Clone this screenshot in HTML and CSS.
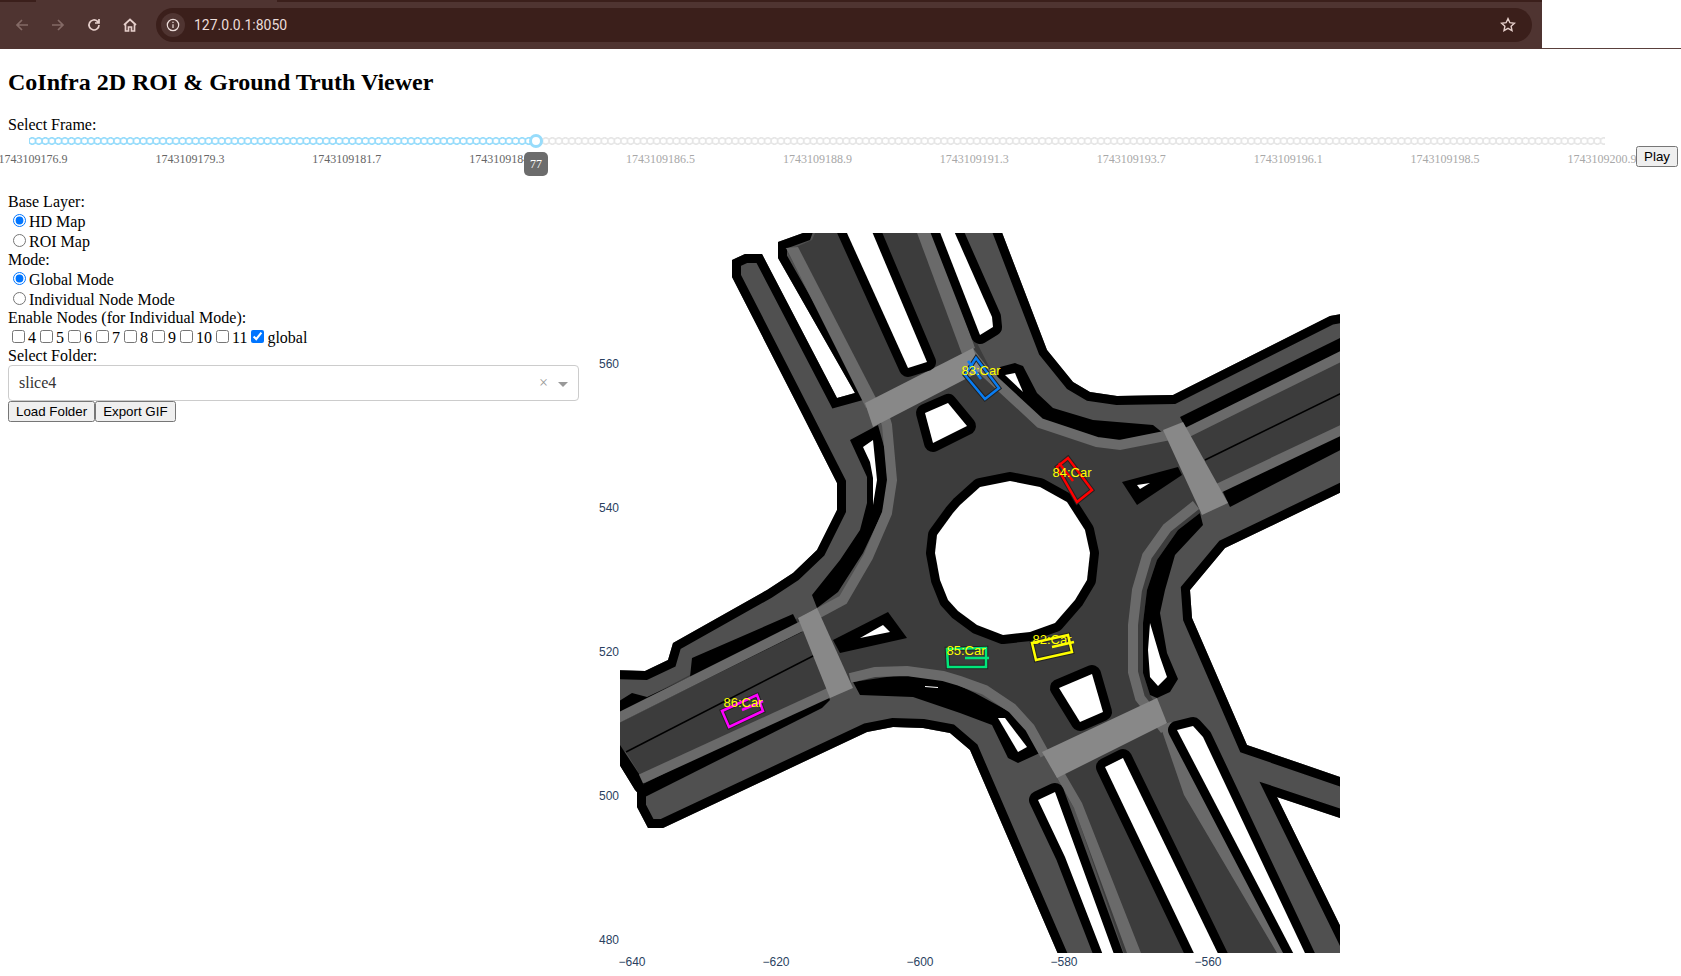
FILE: index.html
```html
<!DOCTYPE html>
<html>
<head>
  <title>CoInfra 2D ROI &amp; Ground Truth Viewer</title>
  <meta name="viewport" content="width=device-width, initial-scale=1.0">
  <link rel="stylesheet" href="styles.css">
</head>
<body>
<div class="chrome">
  <div class="toolbar">
    <div class="tab-strip"><div class="tab-active"></div></div>
    <div class="toolbar-row">
      <svg class="nav-icon dim" viewBox="0 0 16 16"><path d="M14 8H3M8 3L3 8l5 5"/></svg>
      <svg class="nav-icon dim" viewBox="0 0 16 16"><path d="M2 8h11M8 3l5 5-5 5"/></svg>
      <svg class="nav-icon" viewBox="0 0 16 16"><path d="M13 8a5 5 0 1 1-1.5-3.6L13 6M13 2v4H9"/></svg>
      <svg class="nav-icon" viewBox="0 0 16 16"><path d="M2 8l6-5.5L14 8M3.5 7v7h3v-4h3v4h3V7"/></svg>
      <div class="address">
        <span class="info-badge">
          <svg class="info-icon" viewBox="0 0 16 16"><circle cx="8" cy="8" r="6.5"/><path d="M8 7v4.5M8 4.2v1.4"/></svg>
        </span>
        <span class="url">127.0.0.1:8050</span>
        <svg class="star" viewBox="0 0 16 16"><path d="M8 1.6l1.9 4.1 4.5.5-3.3 3 .9 4.4L8 11.4l-4 2.2.9-4.4-3.3-3 4.5-.5z"/></svg>
      </div>
    </div>
  </div>
</div>

<h1 class="title">CoInfra 2D ROI &amp; Ground Truth Viewer</h1>
<div class="field-label frame-label">Select Frame:</div>

<div class="slider-row">
  <div class="slider">
    <div class="rail">
      <div class="rail-done"></div>
      <div class="rail-rest"></div>
      <div class="handle"></div>
      <div class="handle-tip">77</div>
    </div>
    <div class="marks">
      <span class="mark on"><span>1743109176.9</span></span>
      <span class="mark on"><span>1743109179.3</span></span>
      <span class="mark on"><span>1743109181.7</span></span>
      <span class="mark on"><span>1743109184.1</span></span>
      <span class="mark"><span>1743109186.5</span></span>
      <span class="mark"><span>1743109188.9</span></span>
      <span class="mark"><span>1743109191.3</span></span>
      <span class="mark"><span>1743109193.7</span></span>
      <span class="mark"><span>1743109196.1</span></span>
      <span class="mark"><span>1743109198.5</span></span>
      <span class="mark"><span>1743109200.9</span></span>
    </div>
  </div>
  <button class="play">Play</button>
</div>

<div class="main">
  <div class="controls">
    <div class="field-label">Base Layer:</div>
    <label class="radio-item"><input type="radio" name="base" checked>HD Map</label>
    <label class="radio-item"><input type="radio" name="base">ROI Map</label>
    <div class="field-label">Mode:</div>
    <label class="radio-item"><input type="radio" name="mode" checked>Global Mode</label>
    <label class="radio-item"><input type="radio" name="mode">Individual Node Mode</label>
    <div class="field-label">Enable Nodes (for Individual Mode):</div>
    <div class="node-list">
      <label><input type="checkbox">4</label><label><input type="checkbox">5</label><label><input type="checkbox">6</label><label><input type="checkbox">7</label><label><input type="checkbox">8</label><label><input type="checkbox">9</label><label><input type="checkbox">10</label><label><input type="checkbox">11</label><label><input type="checkbox" checked>global</label>
    </div>
    <div class="field-label">Select Folder:</div>
    <div class="dropdown">
      <span class="dropdown-value">slice4</span>
      <span class="dropdown-clear">×</span>
      <span class="dropdown-arrow"></span>
    </div>
    <div class="button-row">
      <button>Load Folder</button><button>Export GIF</button>
    </div>
  </div>

  <svg class="plot" viewBox="590 192 770 784">
    <defs>
      <polygon id="outline" points="732,260 745,254 762,254 837,398 855,393 778,258 778,242 803,233 807,222 998,222 1047,350 1073,382 1090,392 1117,396 1173,395 1330,316 1352,312 1352,487 1225,548 1200,578 1190,590 1192,618 1247,745 1352,781 1352,822 1277,797 1352,950 1352,968 1064,968 970,750 950,733 923,728 893,727 867,732 663,828 648,828 637,807 637,792 635,790 608,746 608,670 645,671 668,660 673,643 767,590 793,573 817,550 837,510 837,483 800,410 732,277"/>
      <clipPath id="outline-clip"><use href="#outline"/></clipPath>
    </defs>

    <svg x="620" y="233" width="720" height="720" viewBox="620 233 720 720">
      <!-- shoulder with its curb drawn on the inside -->
      <use href="#outline" class="shoulder"/>
      <g clip-path="url(#outline-clip)"><use href="#outline" class="curb"/></g>

      <polygon class="road" points="787,251 812,240 820,222 930,222 978,345 1000,388 1043,420 1093,438 1120,441 1163,433 1183,422 1190,427 1352,346 1352,431 1225,490 1200,513 1178,530 1157,560 1147,590 1143,623 1143,673 1150,695 1170,727 1197,790 1294,968 1129,968 1075,810 1057,778 1042,752 1040,745 1027,727 1010,710 980,690 960,683 943,678 907,675 853,682 830,697 645,783 626,752 608,745 608,718 798,618 817,608 840,600 863,557 883,513 888,483 887,460 883,423 873,426 867,402"/>

      <!-- black medians -->
      <polygon class="median" points="850,440 878,425 885,450 888,487 882,513 863,553 838,592 817,608 812,595 840,560 860,530 867,503 867,477"/>
      <polygon class="median" points="608,708 632,693 647,697 690,677 692,658 793,614 802,632 608,728"/>
      <polygon class="median" points="637,790 645,783 827,693 830,700 822,708 645,797"/>
      <polygon class="median" points="620,745 645,783 637,792 620,765"/>
      <polygon class="median" points="1000,367 1015,363 1023,366 1037,393 1053,408 1093,420 1153,425 1163,433 1120,442 1093,440 1043,422 1000,390 997,375"/>
      <polygon class="median" points="1180,417 1352,332 1352,352 1187,430"/>
      <polygon class="median" points="1222,490 1352,429 1352,444 1230,507"/>
      <polygon class="median" points="1200,513 1203,525 1175,555 1165,590 1160,613 1167,653 1178,679 1170,692 1157,698 1150,695 1143,673 1143,623 1147,590 1157,560 1178,530"/>
      <polygon class="median" points="853,682 900,675 947,680 975,693 1010,712 1027,730 1042,752 1018,763 1008,758 992,725 960,713 913,697 860,695"/>
      <polygon class="median" points="833,640 888,612 907,638 840,653"/>
      <polygon class="median" points="1122,482 1178,467 1182,475 1137,505"/>

      <!-- lane lines -->
      <polyline class="lane" points="626,752 815,655"/>
      <polyline class="lane" points="1205,460 1352,388"/>

      <!-- light edge stripes -->
      <polygon class="stripe-fill" points="786,248 798,247 878,402 866,408"/>
      <polygon class="stripe-fill" points="913,222 930,222 975,348 962,354"/>
      <polyline class="stripe" points="880,402 887,425 892,480 887,513 868,557 843,600 815,615"/>
      <polyline class="stripe" points="968,350 985,372 1000,386 1040,423 1097,442 1120,445 1170,435"/>
      <polyline class="stripe" points="1180,436 1352,351"/>
      <polyline class="stripe" points="1215,490 1352,425"/>
      <polyline class="stripe" points="1196,505 1167,528 1147,556 1137,590 1133,625 1133,672 1140,698 1165,730"/>
      <polygon class="stripe-fill" points="1160,725 1171,722 1197,780 1292,953 1277,953 1184,795"/>
      <polygon class="stripe-fill" points="1056,776 1064,772 1082,803 1141,953 1127,953 1074,808"/>
      <polyline class="stripe" points="1045,755 1030,728 1012,708 985,690 960,681 943,676 907,671 875,672 850,678"/>
      <polyline class="stripe" points="835,690 641,779"/>
      <polyline class="stripe" points="810,622 608,723"/>

      <!-- crosswalks -->
      <polygon class="crosswalk" points="865,403 973,348 981,371 873,427"/>
      <polygon class="crosswalk" points="798,618 817,608 853,688 830,698"/>
      <polygon class="crosswalk" points="1163,430 1183,422 1228,503 1202,515"/>
      <polygon class="crosswalk" points="1042,752 1157,698 1167,723 1057,778"/>

      <!-- white gaps between the lanes -->
      <polygon class="island" points="842,222 868,222 927,362 908,368"/>
      <polygon class="island" points="936,222 950,222 992,317 993,327 980,335"/>
      <polygon class="island" points="1038,800 1055,792 1119,968 1108,968 1065,857"/>
      <polygon class="island" points="1105,767 1123,758 1225,968 1201,968"/>
      <polygon class="island" points="1177,730 1193,726 1203,737 1312,968 1301,968"/>
      <polygon class="island" points="925,413 948,403 967,426 933,443"/>
      <polygon class="island" points="1059,688 1092,674 1103,712 1080,722"/>
      <polygon class="island" points="960,505 980,487 1010,481 1040,487 1067,502 1085,530 1090,553 1087,580 1075,600 1055,623 1030,632 1003,635 977,625 958,611 948,600 940,580 935,553 937,535 953,513"/>

      <!-- small white holes inside the medians -->
      <polygon class="hole" points="863,447 873,440 877,480 873,505 873,478 870,462"/>
      <polygon class="hole" points="1005,375 1015,373 1023,392"/>
      <polygon class="hole" points="1150,623 1160,657 1167,677 1158,686 1150,677 1148,650"/>
      <polygon class="hole" points="998,718 1005,718 1027,747 1018,752"/>
      <polygon class="hole" points="860,638 883,625 890,632"/>
      <polygon class="hole" points="1137,485 1150,483 1140,489"/>
      <polygon class="hole" points="925,686 938,687 938,688 925,687"/>
    </svg>

    <!-- vehicles -->
    <polygon class="veh-halo" points="965,375 976,358 999,388 985,399"/>
    <polygon class="veh blue" points="965,375 976,358 999,388 985,399"/>
    <line class="veh blue" x1="968" y1="361" x2="981" y2="379"/>
    <text class="veh-label" x="981" y="375">83:Car</text>

    <polygon class="veh-halo" points="1057,467 1068,458 1092,490 1077,502"/>
    <polygon class="veh red" points="1057,467 1068,458 1092,490 1077,502"/>
    <line class="veh red" x1="1059" y1="463" x2="1073" y2="481"/>
    <text class="veh-label" x="1072" y="477">84:Car</text>

    <polygon class="veh-halo" points="947,649 986,648 986,667 948,667"/>
    <polygon class="veh green" points="947,649 986,648 986,667 948,667"/>
    <line class="veh green" x1="965" y1="658" x2="989" y2="658"/>
    <text class="veh-label" x="966" y="655">85:Car</text>

    <polygon class="veh-halo" points="1032,643 1068,635 1072,652 1036,660"/>
    <polygon class="veh yellow" points="1032,643 1068,635 1072,652 1036,660"/>
    <line class="veh yellow" x1="1052" y1="647" x2="1074" y2="642"/>
    <text class="veh-label" x="1052" y="644">82:Car</text>

    <polygon class="veh-halo" points="722,711 757,695 763,711 729,727"/>
    <polygon class="veh magenta" points="722,711 757,695 763,711 729,727"/>
    <line class="veh magenta" x1="742" y1="710" x2="763" y2="701"/>
    <text class="veh-label" x="743" y="707">86:Car</text>

    <!-- axes -->
    <text class="tick end" x="619" y="368">560</text>
    <text class="tick end" x="619" y="512">540</text>
    <text class="tick end" x="619" y="656">520</text>
    <text class="tick end" x="619" y="800">500</text>
    <text class="tick end" x="619" y="944">480</text>
    <text class="tick" x="632" y="966">−640</text>
    <text class="tick" x="776" y="966">−620</text>
    <text class="tick" x="920" y="966">−600</text>
    <text class="tick" x="1064" y="966">−580</text>
    <text class="tick" x="1208" y="966">−560</text>
  </svg>
</div>
</body>
</html>
```

FILE: styles.css
```css
body {
  margin: 0;
  font-family: "Liberation Serif", serif;
  font-size: 16px;
  color: #000;
  background: #fff;
  overflow: hidden;
}

/* browser bar */
.chrome {
  height: 48px;
  border-bottom: 1px solid #5a403c;
}

.toolbar {
  width: 1542px;
  height: 49px;
  background-color: #4f3431;
}

.tab-strip {
  height: 2px;
  background-color: #3b1f1b;
  padding-left: 36px;
}

.tab-active {
  width: 241px;
  height: 2px;
  background-color: #4f3431;
}

.toolbar-row {
  display: flex;
  align-items: center;
  height: 46px;
  padding-left: 14px;
  padding-right: 10px;
}

.nav-icon {
  width: 16px;
  height: 16px;
  margin-right: 20px;
  fill: none;
  stroke: #e6cfcb;
  stroke-width: 1.7;
}

.nav-icon.dim {
  stroke: #846a66;
}

.address {
  flex: 1;
  display: flex;
  align-items: center;
  height: 34px;
  margin-left: -2px;
  padding: 0 16px 0 5px;
  border-radius: 17px;
  background-color: #3b1f1b;
}

.info-badge {
  display: flex;
  align-items: center;
  justify-content: center;
  width: 24px;
  height: 24px;
  border-radius: 50%;
  background-color: #4f3431;
}

.info-icon {
  width: 14px;
  height: 14px;
  fill: none;
  stroke: #ecdcd9;
  stroke-width: 1.4;
}

.url {
  flex: 1;
  margin-left: 9px;
  font-family: Roboto, sans-serif;
  font-size: 14px;
  color: #ecdcd9;
}

.star {
  width: 16px;
  height: 16px;
  fill: none;
  stroke: #e6cfcb;
  stroke-width: 1.4;
}

/* page header */
.title {
  margin: 20px 0 20px 8px;
  font-size: 24px;
  line-height: 27px;
}

.field-label {
  line-height: 18px;
}

.frame-label {
  margin-left: 8px;
}

/* frame slider */
.slider-row {
  display: flex;
  align-items: flex-start;
  height: 58px;
}

.slider {
  width: 1636px;
}

.rail {
  position: relative;
  display: flex;
  height: 14px;
  margin-left: 29px;
}

.rail-done,
.rail-rest {
  height: 14px;
  background-size: 6.54px 14px;
  background-repeat: repeat-x;
}

.rail-done {
  width: 507px;
  background-image: radial-gradient(circle at center, #fff 2.2px, #97dcfb 2.7px, #97dcfb 3.7px, transparent 4.2px);
}

.rail-rest {
  width: 1069px;
  background-image: radial-gradient(circle at center, #fff 2.2px, #e6e6e6 2.7px, #e6e6e6 3.7px, transparent 4.2px);
}

.handle {
  position: absolute;
  left: 500px;
  top: 0;
  width: 8px;
  height: 8px;
  border: 3px solid #97dcfb;
  border-radius: 50%;
  background-color: #fff;
}

.handle-tip {
  position: absolute;
  z-index: 2;
  left: 495px;
  top: 18px;
  width: 24px;
  height: 24px;
  border-radius: 5px;
  background-color: #6c6c6c;
  color: #fff;
  font-size: 12px;
  line-height: 24px;
  text-align: center;
}

.marks {
  display: flex;
  justify-content: space-between;
  width: 1569px;
  margin-left: 33px;
  margin-top: 4px;
  font-size: 12px;
  line-height: 14px;
  color: #a8a8a8;
}

.mark {
  display: flex;
  justify-content: center;
  width: 0;
  white-space: nowrap;
}

.mark.on {
  color: #666;
}

.play {
  margin-top: 12px;
  height: 21px;
  width: 42px;
  padding: 0;
}

/* left controls */
.main {
  display: flex;
}

.controls {
  width: 571px;
  margin-left: 8px;
  margin-top: 1px;
}

.radio-item {
  display: block;
  height: 20px;
  line-height: 20px;
}

.node-list {
  height: 20px;
  line-height: 20px;
}

.dropdown {
  display: flex;
  align-items: center;
  height: 34px;
  padding-left: 10px;
  border: 1px solid #ccc;
  border-radius: 4px;
  color: #333;
}

.dropdown-value {
  flex: 1;
}

.dropdown-clear {
  width: 14px;
  color: #999;
  font-size: 16px;
}

.dropdown-arrow {
  width: 0;
  height: 0;
  margin: 2px 10px 0 5px;
  border-top: 5px solid #999;
  border-left: 5px solid transparent;
  border-right: 5px solid transparent;
}

.button-row {
  display: flex;
}

/* plot */
.plot {
  display: block;
  flex: none;
  width: 770px;
  height: 784px;
  margin-left: 11px;
}

.shoulder {
  fill: #505050;
}

.curb {
  fill: none;
  stroke: #000;
  stroke-width: 18;
}

.road {
  fill: #3c3c3c;
}

.median {
  fill: #000;
}

.lane {
  fill: none;
  stroke: #000;
  stroke-width: 1.5;
}

.stripe {
  fill: none;
  stroke: #6a6a6a;
  stroke-width: 10;
}

.stripe-fill {
  fill: #6a6a6a;
}

.crosswalk {
  fill: #888;
}

.island {
  fill: #fff;
  stroke: #000;
  stroke-width: 18;
  stroke-linejoin: round;
  paint-order: stroke;
}

.hole {
  fill: #fff;
}

.veh-halo {
  fill: none;
  stroke: #222;
  stroke-width: 4.5;
}

.veh {
  fill: none;
  stroke-width: 2.5;
}

.blue { stroke: #0a7df2; }
.red { stroke: #ff0000; }
.green { stroke: #00e67a; }
.yellow { stroke: #ffff00; }
.magenta { stroke: #ff00ff; }

.veh-label {
  fill: #ffff00;
  font-family: "Liberation Sans", sans-serif;
  font-size: 13px;
  text-anchor: middle;
}

.tick {
  fill: #2a3f5f;
  font-family: "Liberation Sans", sans-serif;
  font-size: 12px;
  text-anchor: middle;
}

.tick.end {
  text-anchor: end;
}
```
